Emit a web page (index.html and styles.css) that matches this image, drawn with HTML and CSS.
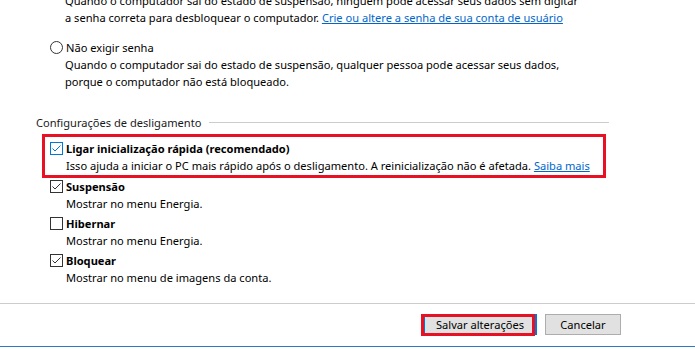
FILE: index.html
```html
<!DOCTYPE html>
<html lang="pt-BR">
<head>
  <meta charset="UTF-8">
  <title>Opções de energia - Configurações do sistema</title>
  <link rel="stylesheet" href="styles.css">
</head>
<body>
  <div class="page">
    <div class="wake-text">
      <p>Quando o computador sai do estado de suspensão, ninguém pode acessar seus dados sem digitar</p>
      <p>a senha correta para desbloquear o computador. <a href="#">Crie ou altere a senha de sua conta de usuário</a></p>
    </div>

    <label class="radio-row">
      <svg class="radio" width="13" height="13" viewBox="0 0 13 13"><circle cx="6.5" cy="6.5" r="6" fill="#fff" stroke="#333" stroke-width="1"/></svg>
      <span>Não exigir senha</span>
    </label>
    <div class="radio-desc">
      <p>Quando o computador sai do estado de suspensão, qualquer pessoa pode acessar seus dados,</p>
      <p>porque o computador não está bloqueado.</p>
    </div>

    <div class="group-title">
      <span>Configurações de desligamento</span>
      <div class="group-line"></div>
    </div>

    <div class="options">
      <div class="highlight">
        <div class="option">
          <svg class="check" width="13" height="13" viewBox="0 0 13 13"><rect x="0.5" y="0.5" width="12" height="12" fill="#fff" stroke="#0078d7"/><path d="M2.5 6.5 L5 9 L10.5 3.5" fill="none" stroke="#0078d7" stroke-width="1"/></svg>
          <span class="option-title">Ligar inicialização rápida (recomendado)</span>
          <span class="option-desc">Isso ajuda a iniciar o PC mais rápido após o desligamento. A reinicialização não é afetada. <a href="#">Saiba mais</a></span>
        </div>
      </div>

      <div class="option">
        <svg class="check" width="13" height="13" viewBox="0 0 13 13"><rect x="0.5" y="0.5" width="12" height="12" fill="#fff" stroke="#333"/><path d="M2.5 6.5 L5 9 L10.5 3.5" fill="none" stroke="#333" stroke-width="1"/></svg>
        <span class="option-title">Suspensão</span>
        <span class="option-desc">Mostrar no menu Energia.</span>
      </div>

      <div class="option">
        <svg class="check" width="13" height="13" viewBox="0 0 13 13"><rect x="0.5" y="0.5" width="12" height="12" fill="#fff" stroke="#333"/></svg>
        <span class="option-title">Hibernar</span>
        <span class="option-desc">Mostrar no menu Energia.</span>
      </div>

      <div class="option">
        <svg class="check" width="13" height="13" viewBox="0 0 13 13"><rect x="0.5" y="0.5" width="12" height="12" fill="#fff" stroke="#333"/><path d="M2.5 6.5 L5 9 L10.5 3.5" fill="none" stroke="#333" stroke-width="1"/></svg>
        <span class="option-title">Bloquear</span>
        <span class="option-desc">Mostrar no menu de imagens da conta.</span>
      </div>
    </div>

    <div class="separator"></div>

    <div class="buttons">
      <button class="btn btn-primary" type="button">Salvar alterações</button>
      <button class="btn" type="button">Cancelar</button>
    </div>

    <div class="bottom-bar"></div>
  </div>
</body>
</html>
```

FILE: styles.css
```css
html, body {
  margin: 0;
  padding: 0;
  background: #fff;
  overflow: hidden;
}

body {
  font-family: "Noto Sans", "Open Sans", sans-serif;
  font-size: 11.1px;
  line-height: 17px;
  color: #000;
}

p {
  margin: 0;
  white-space: nowrap;
}

a {
  color: #0066cc;
  text-decoration: underline;
}

.page {
  margin-top: -8px;
  height: 358px;
}

.wake-text {
  padding-left: 65px;
}

.radio-row {
  display: flex;
  align-items: center;
  gap: 3px;
  margin-top: 13px;
  padding-left: 50px;
  height: 17px;
}

.radio {
  display: block;
}

.radio-desc {
  padding-left: 65px;
}

.group-title {
  display: flex;
  align-items: center;
  gap: 8px;
  margin-top: 24px;
  padding-left: 36px;
  margin-right: 86px;
  color: #1a1a1a;
}

.group-line {
  flex: 1;
  height: 1px;
  background: #cccccc;
}

.options {
  padding-left: 50px;
  margin-top: 3px;
}

.highlight {
  margin-left: -8px;
  width: 564px;
  box-sizing: border-box;
  border: 3px solid #e81123;
  padding: 3px 0 1px 5px;
}

.option {
  display: grid;
  grid-template-columns: 13px 1fr;
  column-gap: 3px;
  align-items: center;
  margin-bottom: 3px;
  white-space: nowrap;
}

.highlight .option {
  margin-bottom: 0;
}

.check {
  display: block;
}

.option-title {
  font-weight: bold;
}

.option-desc {
  grid-column: 2;
}

.separator {
  height: 1px;
  background: #cccccc;
  margin-top: 17px;
}

.buttons {
  display: flex;
  justify-content: flex-end;
  gap: 8px;
  margin-top: 10px;
  padding-right: 74px;
}

.btn {
  position: relative;
  font-family: inherit;
  font-size: 11.1px;
  line-height: 17px;
  height: 21px;
  width: 76px;
  padding: 0;
  background: #e1e1e1;
  border: 1px solid #adadad;
  color: #000;
}

.btn-primary {
  width: 114px;
  border: 2px solid #0078d7;
}

/* marcação vermelha por cima do botão */
.btn-primary::after {
  content: "";
  position: absolute;
  top: -2px;
  bottom: -3px;
  left: -4px;
  right: 0;
  border: 3px solid #e81123;
}

.bottom-bar {
  height: 1px;
  background: #2b79c2;
  margin-top: 11px;
}
```
